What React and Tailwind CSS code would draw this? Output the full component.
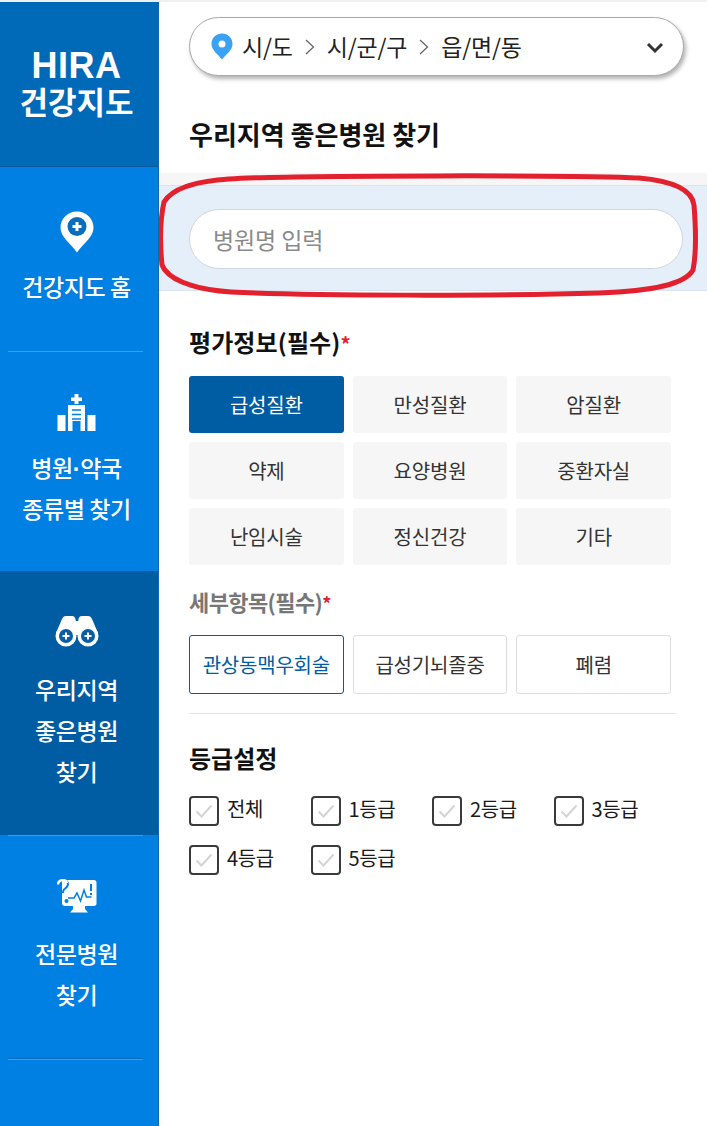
const FONT = "font-['Noto_Sans_CJK_KR','Noto_Sans',sans-serif]";

function PinPlus() {
  return (
    <svg width="34" height="42" viewBox="0 0 34 42">
      <path d="M17 .5C7.800.5.500 7.800.500 16.500.500 26 9.500 31 17 41.500 24.500 31 33.500 26 33.500 16.500 33.500 7.800 26.200.5 17 .5Z" fill="#fff" />
      <circle cx="17" cy="15.500" r="9.500" fill="#0a6cbc" />
      <path d="M17 11v9M12.500 15.500h9" stroke="#fff" strokeWidth="3" />
    </svg>
  );
}

function HospitalIcon() {
  return (
    <svg width="39" height="37" viewBox="0 0 39 37">
      <path d="M17.500 0h4v3.500H25v3.500h-3.500v3h-4V7H14V3.500h3.500Z" fill="#fff" />
      <path d="M11 11h17v26H11Z" fill="#fff" />
      <path d="M15 16h9M15 20.500h9M15 25h9" stroke="#0080e3" strokeWidth="1.500" fill="none" />
      <path d="M15.500 27h8v10h-8Z" fill="#0080e3" />
      <path d="M.500 21h8v16h-8ZM30.500 21h8v16h-8Z" fill="#fff" />
    </svg>
  );
}

function Binoculars() {
  return (
    <svg width="44" height="32" viewBox="0 0 44 32">
      <path d="M11 1h6c2 0 3 1 3.500 3l.3 2h2.400l.3-2C24 2 25 1 27 1h6c2 0 3 1 4 3l6 14H1L7 4c1-2 2-3 4-3Z" fill="#fff" />
      <circle cx="11" cy="21" r="10.500" fill="#fff" />
      <circle cx="33" cy="21" r="10.500" fill="#fff" />
      <rect x="19" y="10" width="6" height="10" fill="#fff" />
      <circle cx="11" cy="21" r="7" fill="#0a5ea3" />
      <circle cx="33" cy="21" r="7" fill="#0a5ea3" />
      <path d="M11 17.500v7M7.500 21h7M33 17.500v7M29.500 21h7" stroke="#fff" strokeWidth="2" />
    </svg>
  );
}

function MonitorIcon() {
  return (
    <svg width="40" height="34" viewBox="0 0 40 34">
      <path d="M6 1h31c1.500 0 2.500 1 2.500 2.500v21c0 1.500-1 2.500-2.500 2.500H28v3l3 3.500H13l3-3.500v-3H8c-2 0-3-1-3-3V1Z" fill="#fff" />
      <path d="M1.500 7c-1-3 1.500-6 4.500-6 2.500 0 5 1.500 5 4.500 0 2-2.500 3.500-4 5-.8.800-1 2-1 3.500" stroke="#0080e3" strokeWidth="2" fill="none" />
      <path d="M.800 5.500C1 3 3.500 1 6 1c2 0 3.500 1 4 3" stroke="#fff" strokeWidth="2.500" fill="none" />
      <path d="M11 19h6l3-5 3.500 8 3.500-11 2.500 7h5" stroke="#0080e3" strokeWidth="1.500" fill="none" />
      <rect x="33" y="5" width="2" height="7" fill="#0080e3" />
      <rect x="33" y="14" width="2" height="2" fill="#0080e3" />
      <circle cx="9.500" cy="22" r="2" fill="#0080e3" />
    </svg>
  );
}

function SideItem({ icon, lines, active, className, textClass }) {
  return (
    <div className={`flex flex-col items-center pr-[5px] ${active ? "bg-[#005ca3]" : ""} ${className}`}>
      <div className="flex h-[44px] items-center justify-center">{icon}</div>
      <div className={`flex flex-col items-center text-[23px] font-medium leading-[41px] tracking-[-0.4px] text-white ${textClass}`}>
        {lines.map((l, i) => (
          <div key={i}>{l}</div>
        ))}
      </div>
    </div>
  );
}

function Check() {
  return (
    <span className="flex h-[30px] w-[30px] items-center justify-center rounded-[4px] border-2 border-[#3a3a3a] bg-white">
      <svg width="20" height="16" viewBox="0 0 20 16">
        <path d="M2.500 8.500 7.500 13.500 17.500 2.500" stroke="#d4d4d4" strokeWidth="2" fill="none" />
      </svg>
    </span>
  );
}

function Grade({ label }) {
  return (
    <label className="flex h-[30px] items-center gap-[8px] text-[20px] tracking-[-0.4px] text-[#1a1a1a]">
      <Check />
      <span className="-mt-[4px]">{label}</span>
    </label>
  );
}

function Sep({ color }) {
  return <div className={`ml-[8px] h-px w-[135px] ${color}`} />;
}

export default function App() {
  const evalItems = ["급성질환", "만성질환", "암질환", "약제", "요양병원", "중환자실", "난임시술", "정신건강", "기타"];
  return (
    <div className={`relative flex h-[1126px] w-[707px] overflow-hidden bg-white pt-[2px] ${FONT}`}>
      <div className="absolute left-0 top-0 h-[2px] w-full bg-[#f0f0f0]" />
      <aside className="flex h-[1124px] w-[159px] shrink-0 flex-col border-r border-[#1168ae] bg-[#0080e3]">
        <div className="flex h-[165px] flex-col items-center border-b border-[#0a5a9c] bg-[#0069b8] pr-[5px] pt-[46px] text-white">
          <div className="font-['Liberation_Sans',sans-serif] text-[36px] font-bold leading-[35px] tracking-[0.5px]">HIRA</div>
          <div className="text-[31px] font-bold leading-[35px]">건강지도</div>
        </div>
        <SideItem icon={<PinPlus />} lines={["건강지도 홈"]} className="h-[184px] pt-[43px]" textClass="mt-[12px]" />
        <Sep color="bg-[#3f9bec]" />
        <SideItem
          icon={<HospitalIcon />}
          lines={[
            <>
              병원<span className="font-['Liberation_Sans',sans-serif] font-bold leading-[0]">·</span>약국
            </>,
            "종류별 찾기",
          ]}
          className="h-[219px] pt-[38px]"
          textClass="mt-[13px]"
        />
        <SideItem
          active
          icon={<Binoculars />}
          lines={["우리지역", "좋은병원", "찾기"]}
          className="h-[264px] pt-[38px]"
          textClass="mt-[16px]"
        />
        <Sep color="bg-[#3f9bec]" />
        <SideItem icon={<MonitorIcon />} lines={["전문병원", "찾기"]} className="h-[222px] pt-[38px]" textClass="mt-[15px]" />
        <Sep color="bg-[#0a6cbc]" />
        <Sep color="bg-[#3f9bec]" />
      </aside>

      <main className="relative min-w-0 flex-1">
        <div className="ml-[30px] mt-[15px] flex h-[59px] w-[495px] items-center rounded-full border border-[#a9a9a9] bg-white pl-[21px] pr-[19px] text-[23px] tracking-[-0.2px] text-[#222] shadow-[2px_3px_4px_rgba(0,0,0,0.3)]">
          <svg width="22" height="27" viewBox="0 0 22 27" className="mr-[9px] shrink-0">
            <path d="M11 .5C5 .5.500 5 .500 11c0 6 6 10 10.500 15.500C15.500 21 21.500 17 21.500 11 21.500 5 17 .5 11 .5Z" fill="#3aa2f2" />
            <circle cx="11" cy="11" r="3.500" fill="#fff" />
          </svg>
          <span>시/도</span>
          <svg width="12" height="18" viewBox="0 0 12 18" className="mx-[11px]">
            <path d="M2 2l7.500 7L2 16" stroke="#666" strokeWidth="1.300" fill="none" />
          </svg>
          <span>시/군/구</span>
          <svg width="12" height="18" viewBox="0 0 12 18" className="mx-[11px]">
            <path d="M2 2l7.500 7L2 16" stroke="#666" strokeWidth="1.300" fill="none" />
          </svg>
          <span>읍/면/동</span>
          <svg width="18" height="12" viewBox="0 0 18 12" className="ml-auto mt-[3px]">
            <path d="M2 2l7 7 7-7" stroke="#333" strokeWidth="3" fill="none" />
          </svg>
        </div>

        <h1 className="ml-[30px] mt-[40px] text-[26px] font-bold leading-[36px] text-[#111]">
          우리지역 좋은병원 찾기
        </h1>

        <div className="mt-[21px] h-[12px] bg-[#f6f6f6]" />
        <div className="h-[106px] border-y border-[#d9e4ef] bg-[#e4eff9] pl-[30px] pt-[23px]">
          <input
            readOnly
            placeholder="병원명 입력"
            className="h-[60px] w-[494px] rounded-full border border-[#cfd6dc] bg-white px-[23px] text-[23px] tracking-[-0.1px] text-[#888] outline-none placeholder:text-[#8a8a8a]"
          />
        </div>

        <h2 className="ml-[30px] mt-[34px] h-[34px] text-[24px] font-bold leading-[34px] tracking-[0.1px] text-[#111]">
          평가정보(필수)<span className="text-[20px] leading-[0] text-[#e02030]">*</span>
        </h2>
        <div className="ml-[30px] mt-[17px] grid w-[482px] grid-cols-3 gap-[9px]">
          {evalItems.map((t, i) => (
            <div
              key={t}
              className={`flex h-[57px] items-center justify-center rounded-[3px] text-[20px] tracking-[-0.2px] ${
                i === 0 ? "bg-[#005ca3] text-white" : "bg-[#f6f6f6] text-[#333]"
              }`}
            >
              {t}
            </div>
          ))}
        </div>

        <h3 className="ml-[30px] mt-[19px] h-[34px] text-[22px] font-bold leading-[34px] tracking-[-0.6px] text-[#777]">
          세부항목(필수)<span className="text-[18px] leading-[0] text-[#e02030]">*</span>
        </h3>
        <div className="ml-[30px] mt-[17px] grid w-[482px] grid-cols-3 gap-[9px]">
          {["관상동맥우회술", "급성기뇌졸중", "폐렴"].map((t, i) => (
            <div
              key={t}
              className={`flex h-[59px] items-center justify-center rounded-[3px] border text-[20px] tracking-[-0.2px] ${
                i === 0 ? "border-[#005ca3] text-[#005ca3]" : "border-[#dcdcdc] text-[#333]"
              }`}
            >
              {t}
            </div>
          ))}
        </div>
        <div className="ml-[30px] mt-[19px] h-px w-[487px] bg-[#e4e4e4]" />

        <h2 className="ml-[30px] mt-[27px] text-[24px] font-bold leading-[34px] text-[#111]">등급설정</h2>
        <div className="ml-[30px] mt-[21px] grid w-[486px] grid-cols-4 gap-y-[19px]">
          {["전체", "1등급", "2등급", "3등급", "4등급", "5등급"].map((t) => (
            <Grade key={t} label={t} />
          ))}
        </div>

        <svg width="548" height="130" viewBox="0 0 548 130" className="pointer-events-none absolute left-0 top-[168px]" fill="none">
          <path
            d="M70 9C130 5 430 5 480 8 515 11 533 20 535 35 537 60 537 85 534 100 526 114 495 121 440 123 340 126 150 126 72 122 30 119 8 108 3 95 1 75 1 50 5 32 14 17 40 11 70 9Z"
            stroke="#e3202d"
            strokeWidth="5"
          />
        </svg>
      </main>
    </div>
  );
}
